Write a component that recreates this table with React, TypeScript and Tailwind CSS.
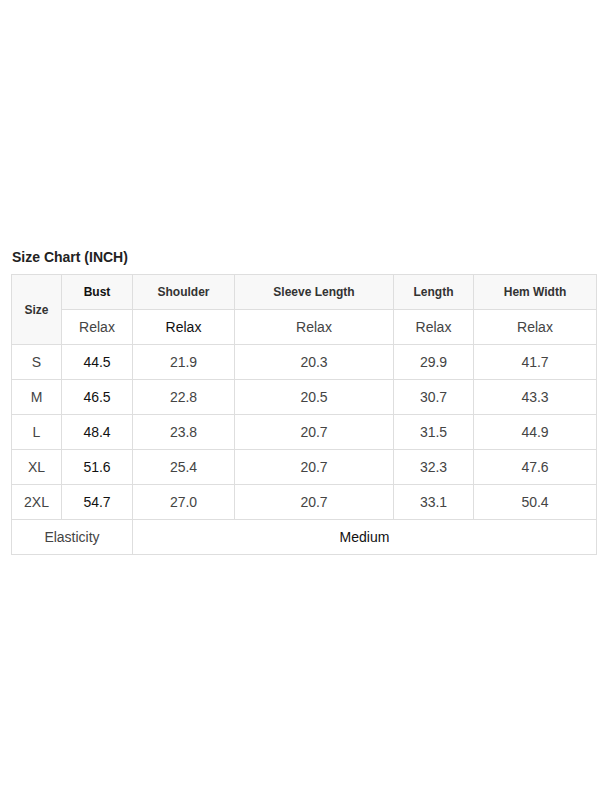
import React from 'react';

const rows = [
  { size: 'S', bust: '44.5', shoulder: '21.9', sleeve: '20.3', length: '29.9', hem: '41.7' },
  { size: 'M', bust: '46.5', shoulder: '22.8', sleeve: '20.5', length: '30.7', hem: '43.3' },
  { size: 'L', bust: '48.4', shoulder: '23.8', sleeve: '20.7', length: '31.5', hem: '44.9' },
  { size: 'XL', bust: '51.6', shoulder: '25.4', sleeve: '20.7', length: '32.3', hem: '47.6' },
  { size: '2XL', bust: '54.7', shoulder: '27.0', sleeve: '20.7', length: '33.1', hem: '50.4' },
];

export default function App() {
  const cell = 'border border-[#dedede] text-center align-middle p-0';
  return (
    <div className="w-[607px] h-[809px] bg-white pt-[248px] pl-[11px] font-['Liberation_Sans',Arial,sans-serif] text-[#333]">
      <h2 className="text-[14px] font-bold leading-[18px] pl-[1px] text-[#222]">Size Chart (INCH)</h2>
      <table className="mt-[8px] w-[585px] border-collapse table-fixed">
        <colgroup>
          <col className="w-[50px]" />
          <col className="w-[71px]" />
          <col className="w-[102px]" />
          <col className="w-[159px]" />
          <col className="w-[80px]" />
          <col className="w-[123px]" />
        </colgroup>
        <tbody>
          <tr className="h-[35px] bg-[#f8f8f8] text-[12px] font-bold">
            <td rowSpan={2} className={cell}>Size</td>
            <td className={`${cell} text-[#111]`}>Bust</td>
            <td className={cell}>Shoulder</td>
            <td className={cell}>Sleeve Length</td>
            <td className={cell}>Length</td>
            <td className={cell}>Hem Width</td>
          </tr>
          <tr className="h-[35px] bg-white text-[14px] text-[#444]">
            <td className={cell}>Relax</td>
            <td className={`${cell} text-[#111]`}>Relax</td>
            <td className={cell}>Relax</td>
            <td className={cell}>Relax</td>
            <td className={cell}>Relax</td>
          </tr>
          {rows.map(r => (
            <tr key={r.size} className="h-[35px] text-[14px] text-[#444]">
              <td className={cell}>{r.size}</td>
              <td className={`${cell} text-[#111]`}>{r.bust}</td>
              <td className={cell}>{r.shoulder}</td>
              <td className={cell}>{r.sleeve}</td>
              <td className={cell}>{r.length}</td>
              <td className={cell}>{r.hem}</td>
            </tr>
          ))}
          <tr className="h-[35px] text-[14px]">
            <td colSpan={2} className={`${cell} text-[#444]`}>Elasticity</td>
            <td colSpan={4} className={`${cell} text-[#111]`}>Medium</td>
          </tr>
        </tbody>
      </table>
    </div>
  );
}
